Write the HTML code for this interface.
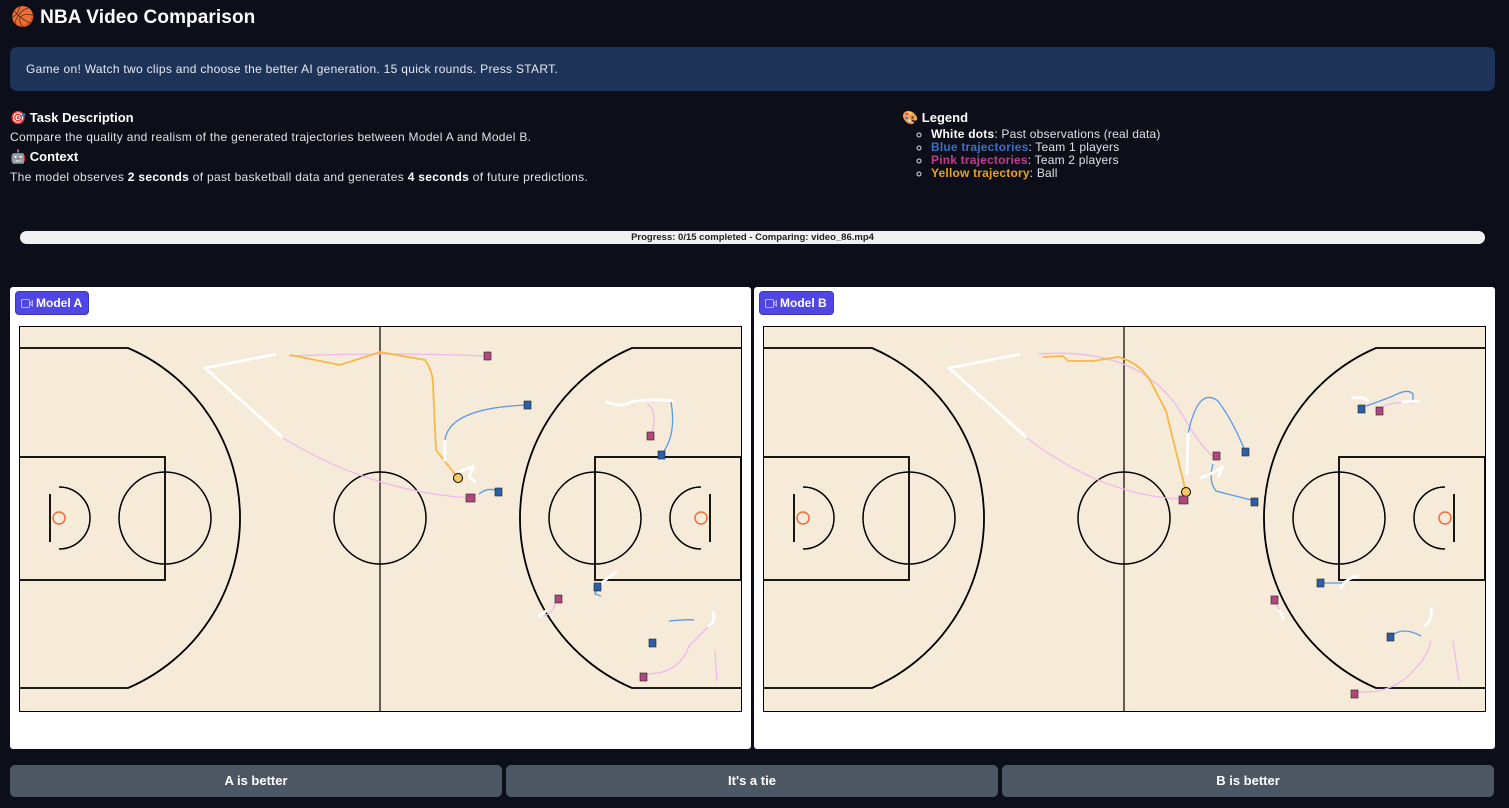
<!DOCTYPE html>
<html><head><meta charset="utf-8"><style>
*{margin:0;padding:0;box-sizing:border-box}
body{width:1509px;height:808px;background:#0c0f1a;font-family:"Liberation Sans",sans-serif;color:#e8e8ec;position:relative;overflow:hidden}
.abs{position:absolute}
h1{position:absolute;left:11px;top:5px;font-size:19px;font-weight:bold;color:#fff;letter-spacing:0.1px}
.banner{left:10px;top:47px;width:1485px;height:44px;background:#1e3358;border-radius:7px;font-size:12px;letter-spacing:0.3px;padding:15px 0 0 16px;color:#e6e9f0}
.h3{font-size:13px;font-weight:bold;color:#fff}
.t{font-size:12px;letter-spacing:0.3px;color:#dfe1e6}
.t b{color:#fff}
ul{list-style:circle;font-size:12px;letter-spacing:0.2px;color:#dfe1e6;line-height:13px}
.prog{left:20px;top:231px;width:1465px;height:13px;background:#f0f0f0;border-radius:7px;font-size:9.5px;font-weight:bold;color:#222;text-align:center;line-height:13px}
.panel{top:287px;height:462px;background:#fff;border-radius:3px}
.tag{position:absolute;left:5px;top:4px;height:24px;background:#5046e5;border:1px solid #3d34c4;border-radius:4px;color:#fff;font-size:12px;font-weight:bold;padding:0 6px 0 20px;line-height:22px}
.tag svg{position:absolute;left:5px;top:7px}
.court{position:absolute;top:39px}
.btn{top:765px;height:32px;width:492px;background:#4d5764;border-radius:5px;color:#fff;font-weight:bold;font-size:13px;text-align:center;line-height:32px}
</style></head><body>
<h1>🏀 NBA Video Comparison</h1>
<div class="abs banner">Game on! Watch two clips and choose the better AI generation. 15 quick rounds. Press START.</div>
<div class="abs h3" style="left:10px;top:110px">🎯 Task Description</div>
<div class="abs t" style="left:10px;top:130px">Compare the quality and realism of the generated trajectories between Model A and Model B.</div>
<div class="abs h3" style="left:10px;top:149px">🤖 Context</div>
<div class="abs t" style="left:10px;top:170px">The model observes <b>2 seconds</b> of past basketball data and generates <b>4 seconds</b> of future predictions.</div>
<div class="abs h3" style="left:902px;top:110px">🎨 Legend</div>
<ul class="abs" style="left:931px;top:128px">
<li><b style="color:#fff">White dots</b>: Past observations (real data)</li>
<li><b style="color:#3b6fc0">Blue trajectories</b>: Team 1 players</li>
<li><b style="color:#c13c8a">Pink trajectories</b>: Team 2 players</li>
<li><b style="color:#e8a21a">Yellow trajectory</b>: Ball</li>
</ul>
<div class="abs prog">Progress: 0/15 completed - Comparing: video_86.mp4</div>

<div class="abs panel" style="left:10px;width:741px">
<div class="tag"><svg width="12" height="9" viewBox="0 0 12 9"><rect x="0.5" y="0.5" width="8" height="8" rx="1" fill="none" stroke="#b9b4ff"/><path d="M9 4.5L11.5 2V7z" fill="none" stroke="#b9b4ff"/></svg>Model A</div>
<svg class="court" style="left:9px" width="723" height="386" viewBox="0 0 723 386">
<rect x="0.5" y="0.5" width="722" height="385" fill="#f5ebd8" stroke="#000"/>
<g fill="none" stroke="#000" stroke-width="1.8">
<path d="M0,22 H109 A185,185 0 0 1 109,362 H0"/><path d="M722,22 H613 A185,185 0 0 0 613,362 H722"/>
<rect x="0" y="131" width="146" height="123"/><rect x="576" y="131" width="146" height="123"/>
<circle cx="146" cy="192" r="46" stroke-width="1.5"/><circle cx="576" cy="192" r="46" stroke-width="1.5"/><circle cx="361" cy="192" r="46" stroke-width="1.5"/>
<path d="M361,0V385" stroke-width="1.2"/>
<path d="M31,168V216M691,168V216"/>
<path d="M40,161 A31,31 0 0 1 40,223M682,161 A31,31 0 0 0 682,223" stroke-width="1.5"/>
</g>
<circle cx="40" cy="192" r="6" fill="none" stroke="#f26b3a" stroke-width="1.5"/><circle cx="682" cy="192" r="6" fill="none" stroke="#f26b3a" stroke-width="1.5"/>
<g fill="none" stroke-width="1.3">
<path d="M270,30 Q370,26 469,30" stroke="#f0b8f0"/>
<path d="M264,112 Q350,165 451,172" stroke="#f0b8f0"/>
<path d="M271,29 L321,39 L361,26 L406,34 Q414,45 414,59 L417,124 L439,152" stroke="#f6b84a" stroke-width="1.8"/>
<path d="M426,114 Q430,82 508,79" stroke="#5a9ae8"/>
<path d="M460,168 Q470,160 480,166" stroke="#5a9ae8"/>
<path d="M628,78 Q640,85 632,110" stroke="#f0b8f0"/><path d="M652,76 Q658,110 642,129" stroke="#5a9ae8"/>
<path d="M650,295 Q670,293 675,294" stroke="#5a9ae8"/><path d="M627,348 Q660,348 670,320 Q685,305 690,300" stroke="#f0b8f0"/>
<path d="M536,272 Q538,285 525,290" stroke="#f0b8f0"/><path d="M696,325 L698,355" stroke="#f0b8f0"/>
<path d="M578,262 L576,268 L582,270" stroke="#5a9ae8"/>
</g>
<g fill="none" stroke="#fff" stroke-width="3" stroke-dasharray="1 2.5" stroke-linecap="round">
<path d="M186,42 L258,28"/><path d="M186,42 L264,112"/>
<path d="M426,134 L426,114"/><path d="M440,146 L455,140 L450,150 L456,156"/>
<path d="M588,76 Q602,82 612,76 Q630,72 655,75"/>
<path d="M582,258 Q590,250 598,246"/><path d="M520,290 L527,285"/>
<path d="M690,300 Q697,295 694,285"/>
</g>
<circle cx="439" cy="152" r="4.5" fill="#f8c864" stroke="#000" stroke-width="1"/>
<g stroke="#222" stroke-width="0.6">
<rect x="465" y="26" width="7" height="8" fill="#b2477e"/><rect x="447" y="168" width="9" height="8" fill="#b2477e"/>
<rect x="505" y="75" width="7" height="8" fill="#2b5fa8"/><rect x="476" y="162" width="7" height="8" fill="#2b5fa8"/>
<rect x="628" y="106" width="7" height="8" fill="#b2477e"/><rect x="639" y="125" width="7" height="8" fill="#2b5fa8"/>
<rect x="575" y="257" width="7" height="8" fill="#2b5fa8"/><rect x="536" y="269" width="7" height="8" fill="#b2477e"/>
<rect x="630" y="313" width="7" height="8" fill="#2b5fa8"/><rect x="621" y="347" width="7" height="8" fill="#b2477e"/>
</g>
</svg>
</div>

<div class="abs panel" style="left:754px;width:741px">
<div class="tag"><svg width="12" height="9" viewBox="0 0 12 9"><rect x="0.5" y="0.5" width="8" height="8" rx="1" fill="none" stroke="#b9b4ff"/><path d="M9 4.5L11.5 2V7z" fill="none" stroke="#b9b4ff"/></svg>Model B</div>
<svg class="court" style="left:9px" width="723" height="386" viewBox="0 0 723 386">
<rect x="0.5" y="0.5" width="722" height="385" fill="#f5ebd8" stroke="#000"/>
<g fill="none" stroke="#000" stroke-width="1.8">
<path d="M0,22 H109 A185,185 0 0 1 109,362 H0"/><path d="M722,22 H613 A185,185 0 0 0 613,362 H722"/>
<rect x="0" y="131" width="146" height="123"/><rect x="576" y="131" width="146" height="123"/>
<circle cx="146" cy="192" r="46" stroke-width="1.5"/><circle cx="576" cy="192" r="46" stroke-width="1.5"/><circle cx="361" cy="192" r="46" stroke-width="1.5"/>
<path d="M361,0V385" stroke-width="1.2"/>
<path d="M31,168V216M691,168V216"/>
<path d="M40,161 A31,31 0 0 1 40,223M682,161 A31,31 0 0 0 682,223" stroke-width="1.5"/>
</g>
<circle cx="40" cy="192" r="6" fill="none" stroke="#f26b3a" stroke-width="1.5"/><circle cx="682" cy="192" r="6" fill="none" stroke="#f26b3a" stroke-width="1.5"/>
<g fill="none" stroke-width="1.3">
<path d="M275,28 Q380,20 420,90 Q440,125 453,132" stroke="#f0b8f0"/>
<path d="M264,112 Q340,170 419,173" stroke="#f0b8f0"/>
<path d="M280,31 L300,30 L305,35 L330,35 L355,31 Q380,38 390,60 L403,85 L423,166" stroke="#f6b84a" stroke-width="1.8"/>
<path d="M425,108 Q435,60 455,75 Q470,95 482,125" stroke="#5a9ae8"/>
<path d="M450,138 Q445,155 453,165 L492,175" stroke="#5a9ae8"/>
<path d="M603,80 Q615,76 630,70 Q645,62 650,68 L650,75" stroke="#5a9ae8"/><path d="M620,80 Q635,75 650,77" stroke="#f0b8f0"/>
<path d="M558,257 L580,257 L578,263" stroke="#5a9ae8"/>
<path d="M628,310 Q640,300 658,310" stroke="#5a9ae8"/>
<path d="M594,366 Q630,368 650,345 Q665,330 668,315" stroke="#f0b8f0"/>
<path d="M512,276 Q518,285 520,290" stroke="#f0b8f0"/><path d="M690,315 L696,355" stroke="#f0b8f0"/>
</g>
<g fill="none" stroke="#fff" stroke-width="3" stroke-dasharray="1 2.5" stroke-linecap="round">
<path d="M186,42 L258,28"/><path d="M186,42 L264,112"/>
<path d="M425,108 L424,148"/><path d="M438,152 Q455,145 460,140 L456,150"/>
<path d="M590,72 Q600,70 606,76"/><path d="M640,76 L655,75"/>
<path d="M578,262 Q583,252 595,250"/><path d="M517,285 L520,292"/>
<path d="M662,300 Q670,292 668,282"/>
</g>
<circle cx="423" cy="166" r="4.5" fill="#f8c864" stroke="#000" stroke-width="1"/>
<g stroke="#222" stroke-width="0.6">
<rect x="450" y="126" width="7" height="8" fill="#b2477e"/><rect x="416" y="170" width="9" height="8" fill="#b2477e"/>
<rect x="479" y="122" width="7" height="8" fill="#2b5fa8"/><rect x="488" y="172" width="7" height="8" fill="#2b5fa8"/>
<rect x="595" y="79" width="7" height="8" fill="#2b5fa8"/><rect x="613" y="81" width="7" height="8" fill="#b2477e"/>
<rect x="554" y="253" width="7" height="8" fill="#2b5fa8"/><rect x="508" y="270" width="7" height="8" fill="#b2477e"/>
<rect x="624" y="307" width="7" height="8" fill="#2b5fa8"/><rect x="588" y="364" width="7" height="8" fill="#b2477e"/>
</g>
</svg>
</div>

<div class="abs btn" style="left:10px">A is better</div>
<div class="abs btn" style="left:506px">It's a tie</div>
<div class="abs btn" style="left:1002px">B is better</div>
</body></html>
